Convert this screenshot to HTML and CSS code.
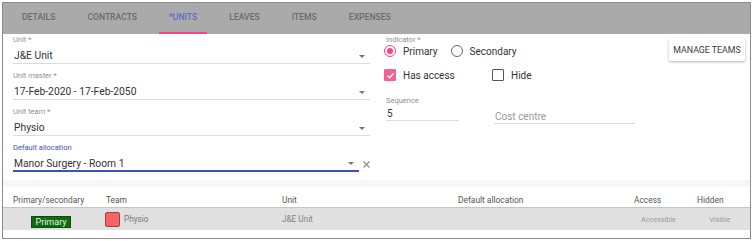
FILE: index.html
```html
<!DOCTYPE html>
<html lang="en">
<head>
  <meta charset="UTF-8" />
  <title>Staff - Units</title>
  <link rel="stylesheet" href="styles.css">
</head>
<body>
  <div class="frame">
    <div class="tabs">
      <a href="#" class="tab">DETAILS</a>
      <a href="#" class="tab">CONTRACTS</a>
      <a href="#" class="tab active">*UNITS</a>
      <a href="#" class="tab">LEAVES</a>
      <a href="#" class="tab">ITEMS</a>
      <a href="#" class="tab">EXPENSES</a>
    </div>

    <div class="form">
      <div class="left-col">
        <div class="field">
          <label>Unit *</label>
          <div class="select"><span>J&amp;E Unit</span><i class="arrow"></i></div>
        </div>
        <div class="field">
          <label>Unit master *</label>
          <div class="select"><span>17-Feb-2020 - 17-Feb-2050</span><i class="arrow"></i></div>
        </div>
        <div class="field">
          <label>Unit team *</label>
          <div class="select"><span>Physio</span><i class="arrow"></i></div>
        </div>
        <div class="field focused">
          <label>Default allocation</label>
          <div class="select-row">
            <div class="select"><span>Manor Surgery - Room 1</span><i class="arrow"></i></div>
            <svg class="clear" width="7" height="7" viewBox="0 0 7 7"><path d="M0.5 0.5L6.5 6.5M6.5 0.5L0.5 6.5" stroke="#8a8a8a" stroke-width="1.1"/></svg>
          </div>
        </div>
      </div>

      <div class="right-col">
        <label class="small-label">Indicator *</label>
        <div class="radio-row">
          <span class="radio checked"></span><span class="opt">Primary</span>
          <span class="radio"></span><span class="opt">Secondary</span>
        </div>
        <div class="check-row">
          <div class="check-item wide">
            <span class="checkbox checked">
              <svg width="9" height="9" viewBox="0 0 9 9"><path d="M1.5 4.6L3.6 6.7L7.6 2.3" fill="none" stroke="#fff" stroke-width="1.3"/></svg>
            </span>
            <span class="opt">Has access</span>
          </div>
          <div class="check-item">
            <span class="checkbox"></span>
            <span class="opt">Hide</span>
          </div>
        </div>
        <div class="input-row">
          <div class="seq">
            <label class="small-label">Sequence</label>
            <div class="input">5</div>
          </div>
          <div class="cost">
            <div class="input placeholder">Cost centre</div>
          </div>
        </div>
      </div>

      <button class="manage-btn">MANAGE TEAMS</button>
    </div>

    <div class="divider"></div>

    <div class="grid-head">
      <div class="c1">Primary/secondary</div>
      <div>Team</div>
      <div>Unit</div>
      <div>Default allocation</div>
      <div>Access</div>
      <div>Hidden</div>
    </div>
    <div class="grid-row">
      <div class="c1 center"><span class="badge">Primary</span></div>
      <div class="team"><span class="swatch"></span>Physio</div>
      <div class="unit">J&amp;E Unit</div>
      <div></div>
      <div class="tiny center">Accessible</div>
      <div class="tiny center">Visible</div>
    </div>
  </div>
</body>
</html>
```

FILE: styles.css
```css
:root {
  --pink: #ff4081;
  --indigo: #3f51b5;
  --label: #8f8f8f;
  --text: #333333;
  --line: #dcdcdc;
}
* { box-sizing: border-box; }
body {
  margin: 0;
  font-family: Roboto, 'Noto Sans', sans-serif;
  background: #ffffff;
}
.frame {
  margin: 2px 3px 0 2px;
  height: 237px;
  border: 1px solid #8c8c8c;
  display: flex;
  flex-direction: column;
}

/* tabs */
.tabs {
  height: 31px;
  background: #aaaaaa;
  display: flex;
  padding-left: 9px;
  flex-shrink: 0;
}
.tab {
  padding: 0 10px;
  margin-right: 12px;
  font-size: 8.6px;
  font-weight: 500;
  color: #6b6b6b;
  text-decoration: none;
  line-height: 29px;
  border-bottom: 2px solid transparent;
}
.tab.active {
  color: #5f6bc4;
  border-bottom-color: var(--pink);
}

/* form */
.form {
  height: 146px;
  display: flex;
  padding: 1px 5px 0 10px;
  flex-shrink: 0;
}
.left-col { width: 357px; }
.field { margin-bottom: 7px; }
.field label {
  display: block;
  font-size: 7.5px;
  line-height: 10px;
  color: var(--label);
  margin-bottom: 4px;
}
.select {
  display: flex;
  align-items: center;
  justify-content: space-between;
  height: 15px;
  padding-right: 5px;
  font-size: 10.3px;
  line-height: 14px;
  color: var(--text);
  border-bottom: 1px solid var(--line);
}
.select span { padding-left: 1px; }
.arrow {
  width: 0;
  height: 0;
  border-left: 3px solid transparent;
  border-right: 3px solid transparent;
  border-top: 3px solid #777;
}
.field.focused label { color: var(--indigo); }
.select-row {
  display: flex;
  align-items: center;
}
.select-row .select {
  width: 346px;
  padding-right: 5px;
  border-bottom: 2px solid var(--indigo);
  height: 15px;
}
.clear { margin-left: 4px; margin-top: -1px; }

.right-col {
  margin-left: 14px;
  flex: 1;
}
.small-label {
  display: block;
  font-size: 7.5px;
  line-height: 9px;
  color: var(--label);
  padding-left: 2px;
}
.radio-row, .check-row {
  display: flex;
  align-items: center;
  height: 14px;
  font-size: 10px;
  color: var(--text);
}
.check-row { margin-top: 10px; }
.opt { margin-left: 7px; }
.radio {
  width: 12px;
  height: 12px;
  border-radius: 50%;
  border: 1.5px solid #666;
  display: inline-flex;
  align-items: center;
  justify-content: center;
}
.radio-row .opt:nth-child(2) { margin-right: 13px; }
.radio.checked { border-color: var(--pink); }
.radio.checked::after {
  content: '';
  width: 6px;
  height: 6px;
  border-radius: 50%;
  background: var(--pink);
}
.check-item { display: flex; align-items: center; }
.check-item.wide { width: 108px; }
.checkbox {
  width: 12px;
  height: 12px;
  border: 1.5px solid #555;
  border-radius: 1px;
  display: inline-flex;
  align-items: center;
  justify-content: center;
}
.checkbox.checked {
  background: #f06292;
  border-color: #f06292;
}
.input-row {
  display: flex;
  margin-top: 14px;
}
.seq { width: 73px; margin-left: 2px; }
.seq .small-label { padding-left: 0; }
.input {
  font-size: 10px;
  line-height: 12px;
  margin-top: 3px;
  padding-left: 1px;
  color: var(--text);
  border-bottom: 1px solid var(--line);
}
.cost { width: 141px; margin-left: 35px; }
.cost .input { margin-top: 15px; }
.placeholder { color: #9a9a9a; }

.manage-btn {
  align-self: flex-start;
  margin-top: 3px;
  width: 76px;
  height: 23px;
  padding: 0;
  border: none;
  border-radius: 2px;
  background: #ffffff;
  box-shadow: 0 1px 3px rgba(0,0,0,0.3);
  font-family: Roboto, sans-serif;
  font-size: 8.8px;
  font-weight: 400;
  color: #3a3a3a;
}

.divider {
  height: 7px;
  background: #f7f7f7;
  flex-shrink: 0;
}

/* table */
.grid-head, .grid-row {
  display: grid;
  grid-template-columns: 96px 176px 176px 176px 63px 1fr;
}
.grid-head {
  height: 21px;
  border-bottom: 1px solid #c4c4c4;
  font-size: 8.4px;
  line-height: 12px;
  color: #555;
}
.grid-head > div { padding: 7px 0 0 7px; }
.grid-head .c1 { padding-left: 10px; }
.grid-row {
  height: 22px;
  background: #e0e0e0;
  align-items: center;
}
.grid-row > div { padding-left: 7px; }
.grid-row .center { padding-left: 0; text-align: center; }
.badge {
  display: inline-block;
  height: 12px;
  padding: 0 3px;
  background: #0f6a12;
  border: 1px solid #0a4d0c;
  color: #e2f7dc;
  font-size: 9px;
  line-height: 10px;
}
.team {
  display: flex;
  align-items: center;
  font-size: 8.2px;
  color: #777;
}
.team .swatch {
  width: 15px;
  height: 15px;
  margin-left: -1px;
  margin-right: 4px;
  background: #f46464;
  border: 1px solid #a83a3a;
  border-radius: 2px;
}
.unit { font-size: 8.2px; color: #808080; }
.tiny { font-size: 7.2px; color: #999; }
```
